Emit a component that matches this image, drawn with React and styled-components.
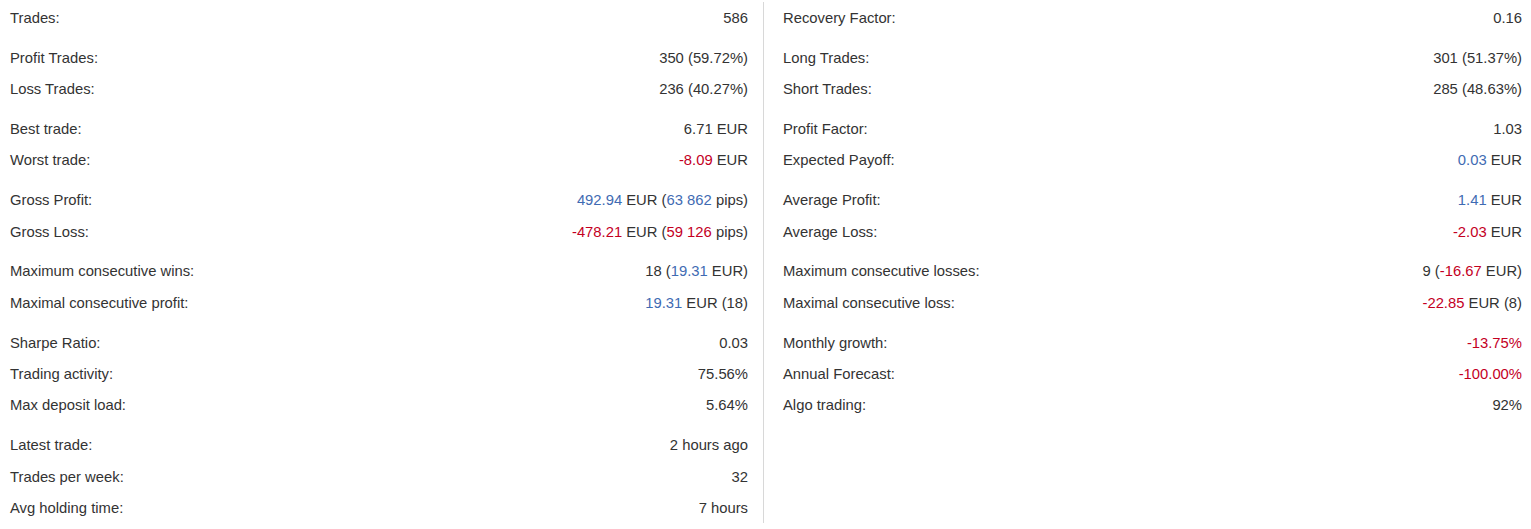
import styled, { createGlobalStyle } from 'styled-components';

const GlobalStyle = createGlobalStyle`
  body {
    margin: 0;
    background: #fff;
    font-family: 'Liberation Sans', Arial, sans-serif;
    color: #333;
  }
`;

//Styles
const Page = styled.div`
  display: grid;
  grid-template-columns: 763px 1fr;
  width: 1531px;
  padding-top: 2px;
`;

const Column = styled.div`
  padding: ${(p) => (p.$right ? '0 9px 0 19px' : '0 15px 0 10px')};
  border-left: ${(p) => (p.$right ? '1px solid #d8d8d8' : 'none')};
  height: 521px;
`;

const Group = styled.div`
  & + & {
    margin-top: 8.5px;
  }
`;

const Row = styled.div`
  display: flex;
  justify-content: space-between;
  align-items: center;
  height: 31.4px;
  font-size: 14.8px;
`;

const Label = styled.span`
  color: #333;
`;

const Value = styled.span`
  color: #333;
  white-space: nowrap;
`;

const Num = styled.span`
  color: ${(p) => (p.$tone === 'neg' ? '#c4001f' : '#3f6bb3')};
`;

const P = ({ children }) => <Num>{children}</Num>;
const N = ({ children }) => <Num $tone="neg">{children}</Num>;

const left = [
  [['Trades:', '586']],
  [
    ['Profit Trades:', '350 (59.72%)'],
    ['Loss Trades:', '236 (40.27%)'],
  ],
  [
    ['Best trade:', '6.71 EUR'],
    ['Worst trade:', <><N>-8.09</N> EUR</>],
  ],
  [
    ['Gross Profit:', <><P>492.94</P> EUR (<P>63 862</P> pips)</>],
    ['Gross Loss:', <><N>-478.21</N> EUR (<N>59 126</N> pips)</>],
  ],
  [
    ['Maximum consecutive wins:', <>18 (<P>19.31</P> EUR)</>],
    ['Maximal consecutive profit:', <><P>19.31</P> EUR (18)</>],
  ],
  [
    ['Sharpe Ratio:', '0.03'],
    ['Trading activity:', '75.56%'],
    ['Max deposit load:', '5.64%'],
  ],
  [
    ['Latest trade:', '2 hours ago'],
    ['Trades per week:', '32'],
    ['Avg holding time:', '7 hours'],
  ],
];

const right = [
  [['Recovery Factor:', '0.16']],
  [
    ['Long Trades:', '301 (51.37%)'],
    ['Short Trades:', '285 (48.63%)'],
  ],
  [
    ['Profit Factor:', '1.03'],
    ['Expected Payoff:', <><P>0.03</P> EUR</>],
  ],
  [
    ['Average Profit:', <><P>1.41</P> EUR</>],
    ['Average Loss:', <><N>-2.03</N> EUR</>],
  ],
  [
    ['Maximum consecutive losses:', <>9 (<N>-16.67</N> EUR)</>],
    ['Maximal consecutive loss:', <><N>-22.85</N> EUR (8)</>],
  ],
  [
    ['Monthly growth:', <N>-13.75%</N>],
    ['Annual Forecast:', <N>-100.00%</N>],
    ['Algo trading:', '92%'],
  ],
];

const StatsColumn = ({ groups, right }) => (
  <Column $right={right}>
    {groups.map((rows, i) => (
      <Group key={i}>
        {rows.map(([label, value]) => (
          <Row key={label}>
            <Label>{label}</Label>
            <Value>{value}</Value>
          </Row>
        ))}
      </Group>
    ))}
  </Column>
);

const App = () => {
  return (
    <>
      <GlobalStyle />
      <Page>
        <StatsColumn groups={left} />
        <StatsColumn groups={right} right />
      </Page>
    </>
  );
};

export default App;
